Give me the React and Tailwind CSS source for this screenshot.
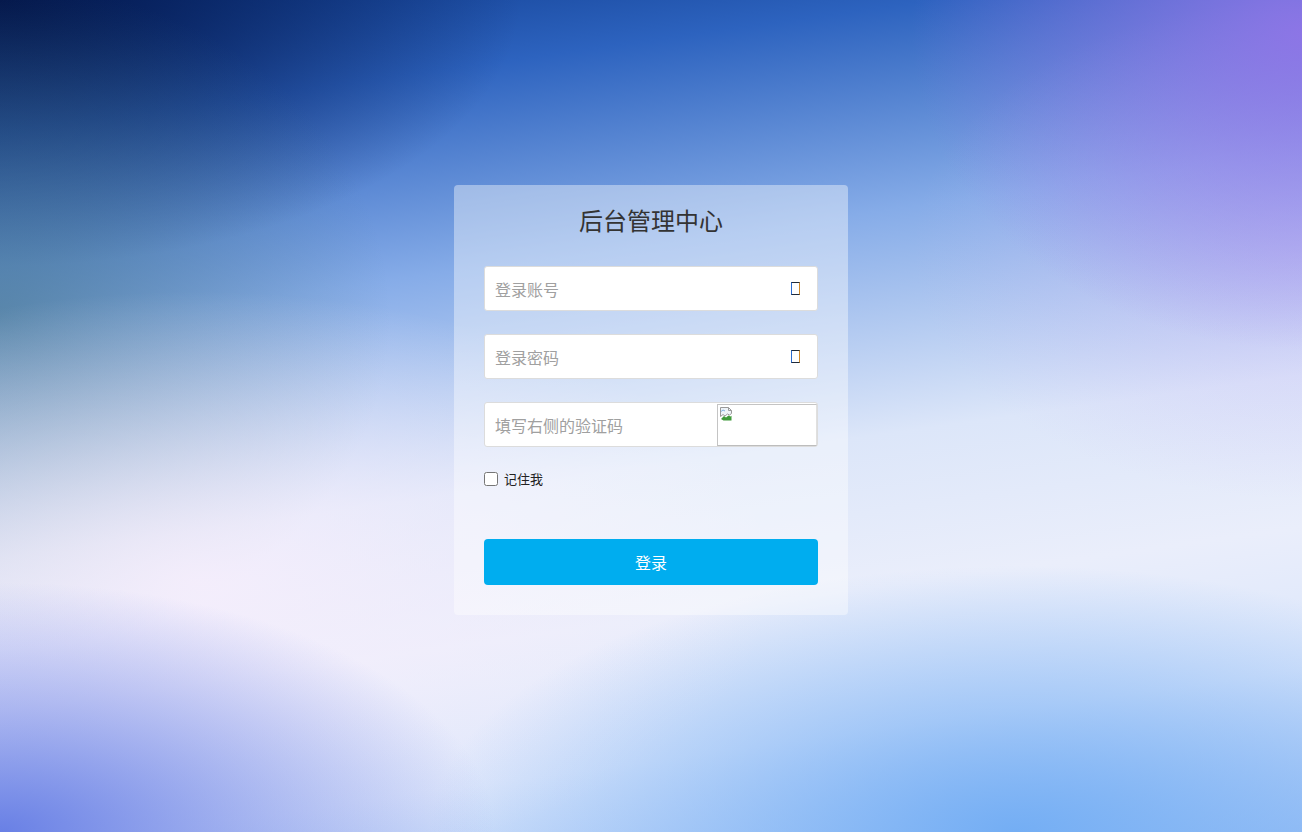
import React from "react";

function TofuIcon() {
  return <span className="block w-[9px] h-[13px] border border-[#1e2a3a] border-l-[#2b6cd0] border-r-[#d08a2a]" />;
}

function BrokenImage() {
  return (
    <svg width="16" height="16" viewBox="0 0 16 16" className="block">
      <path d="M1.5 1.5h8l3 3v3l-2 1.5-2-1-2.5 2-2 -1.5-2.5 2z" fill="#eef3f8" stroke="#9a9a9a" strokeWidth="1" />
      <path d="M9.5 1.5v3h3" fill="none" stroke="#9a9a9a" strokeWidth="1" />
      <path d="M2 13l3-3 2 1.5 2.5-2 2 1 1-0.8V14.5H4.5z" fill="#3f9a3a" />
      <path d="M2 5.5l2-1.5 2 1" fill="none" stroke="#7fb0e0" strokeWidth="1" />
    </svg>
  );
}

export default function App() {
  return (
    <div
      className="w-full h-[832px] flex items-start justify-center overflow-hidden bg-[image:radial-gradient(ellipse_38%_30%_at_0%_100%,rgba(98,122,228,0.95),rgba(98,122,228,0)),radial-gradient(ellipse_45%_32%_at_78%_100%,rgba(112,172,244,0.95),rgba(112,172,244,0)),radial-gradient(ellipse_30%_38%_at_100%_4%,rgba(146,116,232,0.9),rgba(146,116,232,0)),radial-gradient(ellipse_30%_30%_at_100%_30%,rgba(200,180,246,0.45),rgba(200,180,246,0)),radial-gradient(ellipse_45%_35%_at_15%_70%,rgba(246,238,252,0.9),rgba(246,238,252,0)),radial-gradient(ellipse_30%_40%_at_0%_38%,rgba(70,118,140,0.65),rgba(70,118,140,0)),radial-gradient(ellipse_40%_32%_at_0%_0%,#03164a,rgba(3,22,74,0)),linear-gradient(172deg,#0f3c8e_0%,#2d63bf_13%,#86ace8_33%,#dce6f9_55%,#eaeefb_70%,#dbe6fb_84%,#abc9f6_100%)]"
      style={{ fontFamily: '"Noto Sans CJK SC", "Noto Sans", sans-serif' }}
    >
      <div className="mt-[185px] w-[394px] rounded-[4px] bg-white/40 px-[30px] pt-[22px] pb-[30px]">
        <h1 className="text-center text-[24px] leading-[26px] text-[#333] font-normal">后台管理中心</h1>

        <div className="mt-[33px] flex h-[45px] items-center rounded-[3px] border border-[#dcdcdc] bg-white pl-[10px] pr-[17px]">
          <input
            type="text"
            placeholder="登录账号"
            className="flex-1 min-w-0 bg-transparent text-[16px] text-[#333] outline-none placeholder:text-[#a0a0a0]"
          />
          <TofuIcon />
        </div>

        <div className="mt-[23px] flex h-[45px] items-center rounded-[3px] border border-[#dcdcdc] bg-white pl-[10px] pr-[17px]">
          <input
            type="password"
            placeholder="登录密码"
            className="flex-1 min-w-0 bg-transparent text-[16px] text-[#333] outline-none placeholder:text-[#a0a0a0]"
          />
          <TofuIcon />
        </div>

        <div className="mt-[23px] flex h-[45px] items-center rounded-[3px] border border-[#dcdcdc] bg-white pl-[10px]">
          <input
            type="text"
            placeholder="填写右侧的验证码"
            className="flex-1 min-w-0 bg-transparent text-[16px] text-[#333] outline-none placeholder:text-[#a0a0a0]"
          />
          <div className="h-[42px] w-[100px] border border-[#c4c4c4] border-r-[#e0e0e0] border-b-[#bdbdbd] bg-white p-[1px]">
            <BrokenImage />
          </div>
        </div>

        <label className="mt-[24px] flex items-center gap-[6px] text-[13px] leading-[15px] text-[#222]">
          <input type="checkbox" className="m-0 h-[14px] w-[14px]" />
          <span>记住我</span>
        </label>

        <button className="mt-[53px] flex h-[46px] w-full items-center justify-center rounded-[4px] bg-[#00adef] text-[16px] text-white">
          登录
        </button>
      </div>
    </div>
  );
}
